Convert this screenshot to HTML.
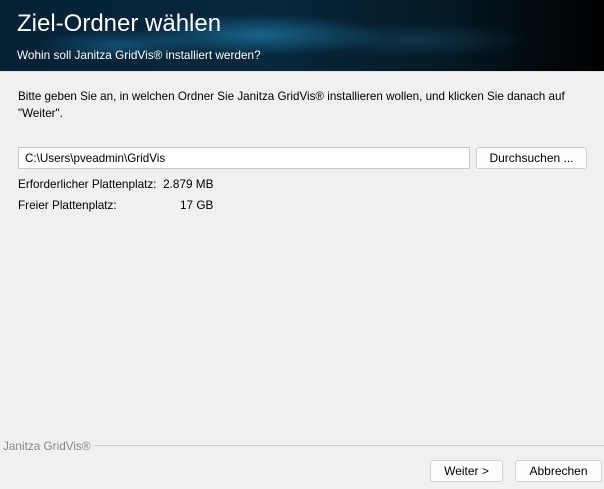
<!DOCTYPE html>
<html><head><meta charset="utf-8"><style>
*{margin:0;padding:0;box-sizing:border-box}
body{width:604px;height:489px;background:#f0f0f0;font-family:"Liberation Sans",sans-serif;font-size:12px;color:#000;position:relative;overflow:hidden}
.hdr{position:absolute;left:0;top:0;width:604px;height:72px;background:
radial-gradient(ellipse 180px 30px at 260px 35px,rgba(40,150,200,.55),transparent 70%),
radial-gradient(ellipse 120px 22px at 120px 45px,rgba(30,120,170,.5),transparent 70%),
radial-gradient(ellipse 160px 25px at 420px 40px,rgba(30,90,120,.4),transparent 70%),
linear-gradient(90deg,#062235 0%,#07283d 45%,#041823 75%,#000 100%);border-bottom:1px solid #e0e0e0}
.t{position:absolute;left:17px;top:10px;color:#fff;font-size:24px;white-space:nowrap}
.s{position:absolute;left:17px;top:48px;color:#fff;font-size:11.8px;white-space:nowrap}
.a{position:absolute;white-space:nowrap;transform-origin:0 0}
.box{position:absolute;background:#fff;border:1px solid #c8c8c8}
.btn{position:absolute;background:#fdfdfd;border:1px solid #d0d0d0;border-radius:3px;text-align:center;font-size:12px;line-height:20px}
</style></head><body>
<div class="hdr"><div class="t">Ziel-Ordner wählen</div><div class="s">Wohin soll Janitza GridVis® installiert werden?</div></div>
<div class="a" style="left:18px;top:89px;transform:scaleX(.97)">Bitte geben Sie an, in welchen Ordner Sie Janitza GridVis® installieren wollen, und klicken Sie danach auf</div>
<div class="a" style="left:18px;top:106px;transform:scaleX(.97)">"Weiter".</div>
<div class="box" style="left:18px;top:147px;width:452px;height:22px"></div>
<div class="a" style="left:25px;top:151px;transform:scaleX(.97)">C:\Users\pveadmin\GridVis</div>
<div class="btn" style="left:476px;top:147px;width:111px;height:22px">Durchsuchen ...</div>
<div class="a" style="left:18px;top:177px;transform:scaleX(.98)">Erforderlicher Plattenplatz:&nbsp; 2.879 MB</div>
<div class="a" style="left:18px;top:198px;transform:scaleX(.98)">Freier Plattenplatz:</div>
<div class="a" style="left:180px;top:198px;transform:scaleX(.98)">17 GB</div>
<div class="a" style="left:3px;top:439px;color:#888;transform:scaleX(.98)">Janitza GridVis®</div>
<div style="position:absolute;left:94px;top:445px;width:510px;height:1px;background:#d0d0d0"></div>
<div class="btn" style="left:430px;top:460px;width:73px;height:22px">Weiter &gt;</div>
<div class="btn" style="left:515px;top:460px;width:87px;height:22px">Abbrechen</div>
</body></html>
